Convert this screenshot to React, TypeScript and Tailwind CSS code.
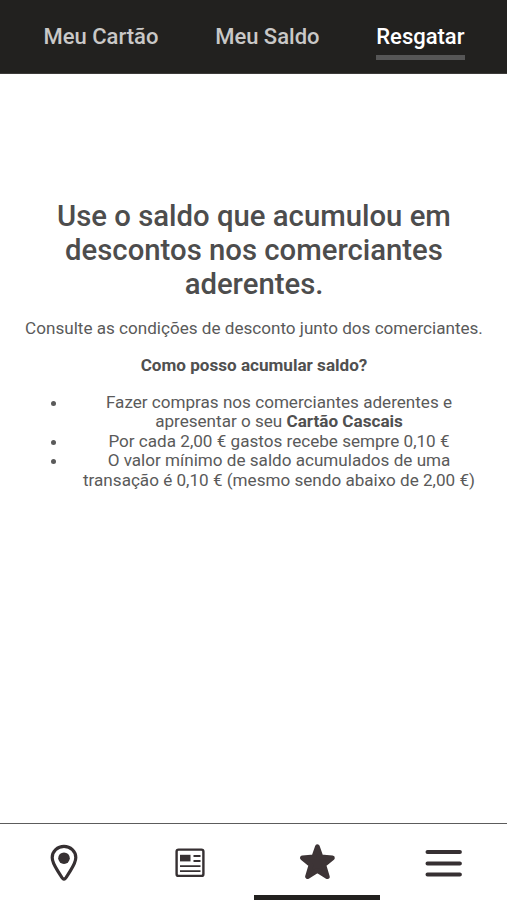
const tabs = [
  { label: "Meu Cartão", active: false },
  { label: "Meu Saldo", active: false },
  { label: "Resgatar", active: true },
];

function PinIcon() {
  return (
    <svg className="ml-[2px]" width="30" height="40" viewBox="0 0 30 40" fill="none">
      <path
        d="M15 36.2C13.5 36.2 12.5 34.2 11.3 32C8 26.2 3.2 20.8 3.2 14.5A11.8 11.2 0 0 1 26.8 14.5C26.8 20.8 22 26.2 18.7 32C17.5 34.2 16.5 36.2 15 36.2Z"
        stroke="#363032"
        strokeWidth="3.2"
      />
      <circle cx="15" cy="15.2" r="5.8" fill="#363032" />
    </svg>
  );
}

function NewsIcon() {
  return (
    <svg width="30" height="30" viewBox="0 0 30 30" fill="none" stroke="#363032">
      <rect x="1.6" y="1.6" width="26.8" height="26.3" rx="2" strokeWidth="2.4" />
      <rect x="5" y="6.8" width="10.5" height="6.6" fill="#363032" stroke="none" />
      <path d="M18.5 8H25.5M18.5 13H25.5M5 18.2H25.5M5 23.2H25.5" strokeWidth="1.8" />
    </svg>
  );
}

function StarIcon() {
  return (
    <svg className="ml-px" width="40" height="40" viewBox="0 0 40 40">
      <path
        d="M20.4 3.8L23.9 13.9L35.4 14.8L26.8 22L30.3 33.6L20.4 27.4L10.5 33.6L14 22L5.4 14.8L16.9 13.9Z"
        fill="#3d3436"
        stroke="#3d3436"
        strokeWidth="4.8"
        strokeLinejoin="round"
      />
    </svg>
  );
}

function MenuIcon() {
  return (
    <svg width="38" height="30" viewBox="0 0 38 30">
      <path
        d="M2.5 4H34.9M2.5 15.4H34.9M2.5 26.6H34.9"
        stroke="#363032"
        strokeWidth="4"
        strokeLinecap="round"
      />
    </svg>
  );
}

export default function App() {
  return (
    <div className="flex h-[900px] w-[507px] flex-col overflow-hidden bg-white font-['Roboto',sans-serif] text-[#4d4d4d]">
      <header className="flex h-[74px] shrink-0 justify-between border-b border-[#3c3b39] bg-[#22211f] pr-[42.5px] pl-[43.5px] pt-[21px]">
        {tabs.map((tab) => (
          <button
            key={tab.label}
            className={
              tab.active
                ? "h-[39px] border-b-[5px] border-[#565656] pb-[2px] text-[22px] leading-[30px] font-medium whitespace-nowrap text-white"
                : "h-[39px] border-b-[5px] border-transparent pb-[2px] text-[22px] leading-[30px] font-medium whitespace-nowrap text-[#c9c8c7]"
            }
          >
            {tab.label}
          </button>
        ))}
      </header>

      <main className="flex-1 pr-[16.5px] pl-[17.5px] pt-[125px] text-center text-[17.1px] leading-[19.6px] text-[#5a5a5a]">
        <h1 className="text-[29.3px] leading-[34px] font-medium text-[#4d4d4d]">
          Use o saldo que acumulou em
          <br />
          descontos nos comerciantes
          <br />
          aderentes.
        </h1>
        <p className="mt-[18px] whitespace-nowrap">
          Consulte as condições de desconto junto dos comerciantes.
        </p>
        <p className="mt-[17px] font-bold text-[#505050]">Como posso acumular saldo?</p>
        <ul className="mt-[17.4px] list-disc pl-[50px] whitespace-nowrap">
          <li>
            Fazer compras nos comerciantes aderentes e
            <br />
            apresentar o seu <strong className="font-bold text-[#505050]">Cartão Cascais</strong>
          </li>
          <li>Por cada 2,00 € gastos recebe sempre 0,10 €</li>
          <li>
            O valor mínimo de saldo acumulados de uma
            <br />
            transação é 0,10 € (mesmo sendo abaixo de 2,00 €)
          </li>
        </ul>
      </main>

      <nav className="grid h-[77px] shrink-0 grid-cols-4 border-t border-[#5c5c5c]">
        <button className="flex h-full items-center justify-center border-b-[5px] border-transparent pt-[7px]">
          <PinIcon />
        </button>
        <button className="flex h-full items-center justify-center border-b-[5px] border-transparent pt-[7px]">
          <NewsIcon />
        </button>
        <button className="flex h-full items-center justify-center border-b-[5px] border-[#22211f] pt-[7px]">
          <StarIcon />
        </button>
        <button className="flex h-full items-center justify-center border-b-[5px] border-transparent pt-[7px]">
          <MenuIcon />
        </button>
      </nav>
    </div>
  );
}
